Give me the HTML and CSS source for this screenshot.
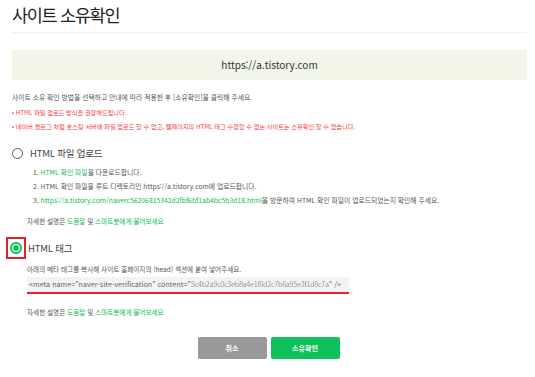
FILE: index.html
```html
<!DOCTYPE html>
<html lang="ko">
<head>
    <meta charset="UTF-8">
    <meta name="viewport" content="width=device-width, initial-scale=1.0">
    <title>사이트 소유확인</title>
    <link rel="stylesheet" href="styles.css">
</head>
<body>
    <div class="page">
        <h1 class="title">사이트 소유확인</h1>

        <div class="site-box">https://a.tistory.com</div>

        <p class="guide">사이트 소유 확인 방법을 선택하고 안내에 따라 적용한 후 [소유확인]을 클릭해 주세요.</p>
        <p class="warn">• HTML 파일 업로드 방식을 권장해드립니다.</p>
        <p class="warn">• 네이버 블로그 처럼 호스팅 서버에 파일 업로드 할 수 없고, 웹페이지의 HTML 태그 수정할 수 없는 사이트는 소유확인 할 수 없습니다.</p>

        <div class="option">
            <label class="option-head">
                <span class="radio-wrap"><span class="radio"></span></span>
                <span class="option-name">HTML 파일 업로드</span>
            </label>
            <ol class="steps">
                <li>1. <a href="#">HTML 확인 파일</a>을 다운로드합니다.</li>
                <li>2. HTML 확인 파일을 루트 디렉토리인 https://a.tistory.com에 업로드합니다.</li>
                <li>3. <a href="#">https://a.tistory.com/naverc56206815342d2fbf6bf1ab4bc5b3d18.html</a>을 방문하여 HTML 확인 파일이 업로드되었는지 확인해 주세요.</li>
            </ol>
            <p class="help">자세한 설명은 <a href="#">도움말</a> 및 <a href="#">스마트봇에게 물어보세요</a></p>
        </div>

        <div class="option">
            <label class="option-head">
                <span class="radio-wrap marked"><span class="radio checked"></span></span>
                <span class="option-name">HTML 태그</span>
            </label>
            <p class="desc">아래의 메타 태그를 복사해 사이트 홈페이지의 (head) 섹션에 붙여 넣어주세요.</p>
            <div class="code">&lt;meta name="naver-site-verification" content="<span class="blur">5c4b2a9c0c3eb8a4e1f0d2c7b6a95e3f1d8c7a</span>" /&gt;</div>
            <p class="help">자세한 설명은 <a href="#">도움말</a> 및 <a href="#">스마트봇에게 물어보세요</a></p>
        </div>

        <div class="buttons">
            <button class="btn cancel">취소</button>
            <button class="btn confirm">소유확인</button>
        </div>
    </div>
</body>
</html>
```

FILE: styles.css
```css
body {
    margin: 0;
    font-family: "Noto Sans CJK KR", "Noto Sans", sans-serif;
    color: #555;
    background: #fff;
}
.page {
    width: 515px;
    padding: 0 8px 0 12px;
}
.title {
    margin: 0;
    padding: 3px 0 5px;
    font-size: 17.5px;
    font-weight: 400;
    letter-spacing: -1.3px;
    color: #222;
    line-height: 24px;
    border-bottom: 1px solid #eee;
}
.site-box {
    margin-top: 17px;
    height: 30px;
    line-height: 30px;
    background: #f1f6e9;
    text-align: center;
    font-size: 10px;
    color: #333;
}
.guide {
    margin: 12px 0 6px;
    font-size: 6.8px;
    line-height: 10px;
    color: #555;
}
.warn {
    margin: 0 0 4px;
    font-size: 6.2px;
    line-height: 10px;
    color: #f63c3c;
}
.option {
    margin-top: 11px;
}
.option + .option {
    margin-top: 12px;
}
.option-head {
    display: flex;
    align-items: center;
    gap: 5px;
    height: 20px;
}
.radio-wrap {
    width: 18px;
    height: 20px;
    display: flex;
    align-items: center;
    justify-content: center;
    box-sizing: border-box;
    margin-left: -4px;
    margin-right: -1px;
}
.radio-wrap.marked {
    border: 2px solid #e4202a;
    width: 20px;
    height: 22px;
    margin-left: -6px;
    margin-right: -3px;
}
.radio {
    width: 9px;
    height: 9px;
    border: 1px solid #555;
    border-radius: 50%;
    box-sizing: content-box;
}
.radio.checked {
    width: 8px;
    height: 8px;
    border: 2px solid #0dc25b;
    display: flex;
    align-items: center;
    justify-content: center;
}
.radio.checked::after {
    content: "";
    width: 6px;
    height: 6px;
    border-radius: 50%;
    background: #0dc25b;
}
.option-name {
    font-size: 9.5px;
    letter-spacing: -0.2px;
    color: #444;
}
.steps {
    list-style: none;
    margin: 4px 0 0 21px;
    padding: 0;
}
.steps li {
    font-size: 6.8px;
    line-height: 10px;
    margin-bottom: 4px;
    color: #555;
}
a {
    color: #0dbd58;
    text-decoration: none;
}
.help {
    margin: 11px 0 0 15px;
    font-size: 6.6px;
    line-height: 10px;
    color: #555;
}
.desc {
    margin: 6px 0 3px 15px;
    font-size: 6.6px;
    line-height: 10px;
    color: #555;
}
.code {
    margin-left: 15px;
    width: 318px;
    height: 14px;
    padding: 1px 2px 0;
    background: #f3f3f3;
    border-bottom: 2px solid #e4202a;
    font-size: 7.2px;
    line-height: 13px;
    color: #666;
    white-space: nowrap;
    overflow: hidden;
}
.blur {
    color: #999;
    filter: blur(0.6px);
    letter-spacing: -0.3px;
}
.code + .help {
    margin-top: 13px;
}
.buttons {
    display: flex;
    justify-content: center;
    gap: 4px;
    margin-top: 20px;
    padding-right: 2px;
}
.btn {
    width: 69px;
    height: 22px;
    border: none;
    border-radius: 2px;
    color: #fff;
    font-family: inherit;
    font-size: 7px;
    font-weight: 700;
    cursor: pointer;
}
.cancel {
    background: #999;
}
.confirm {
    background: #0dc25b;
}
```
